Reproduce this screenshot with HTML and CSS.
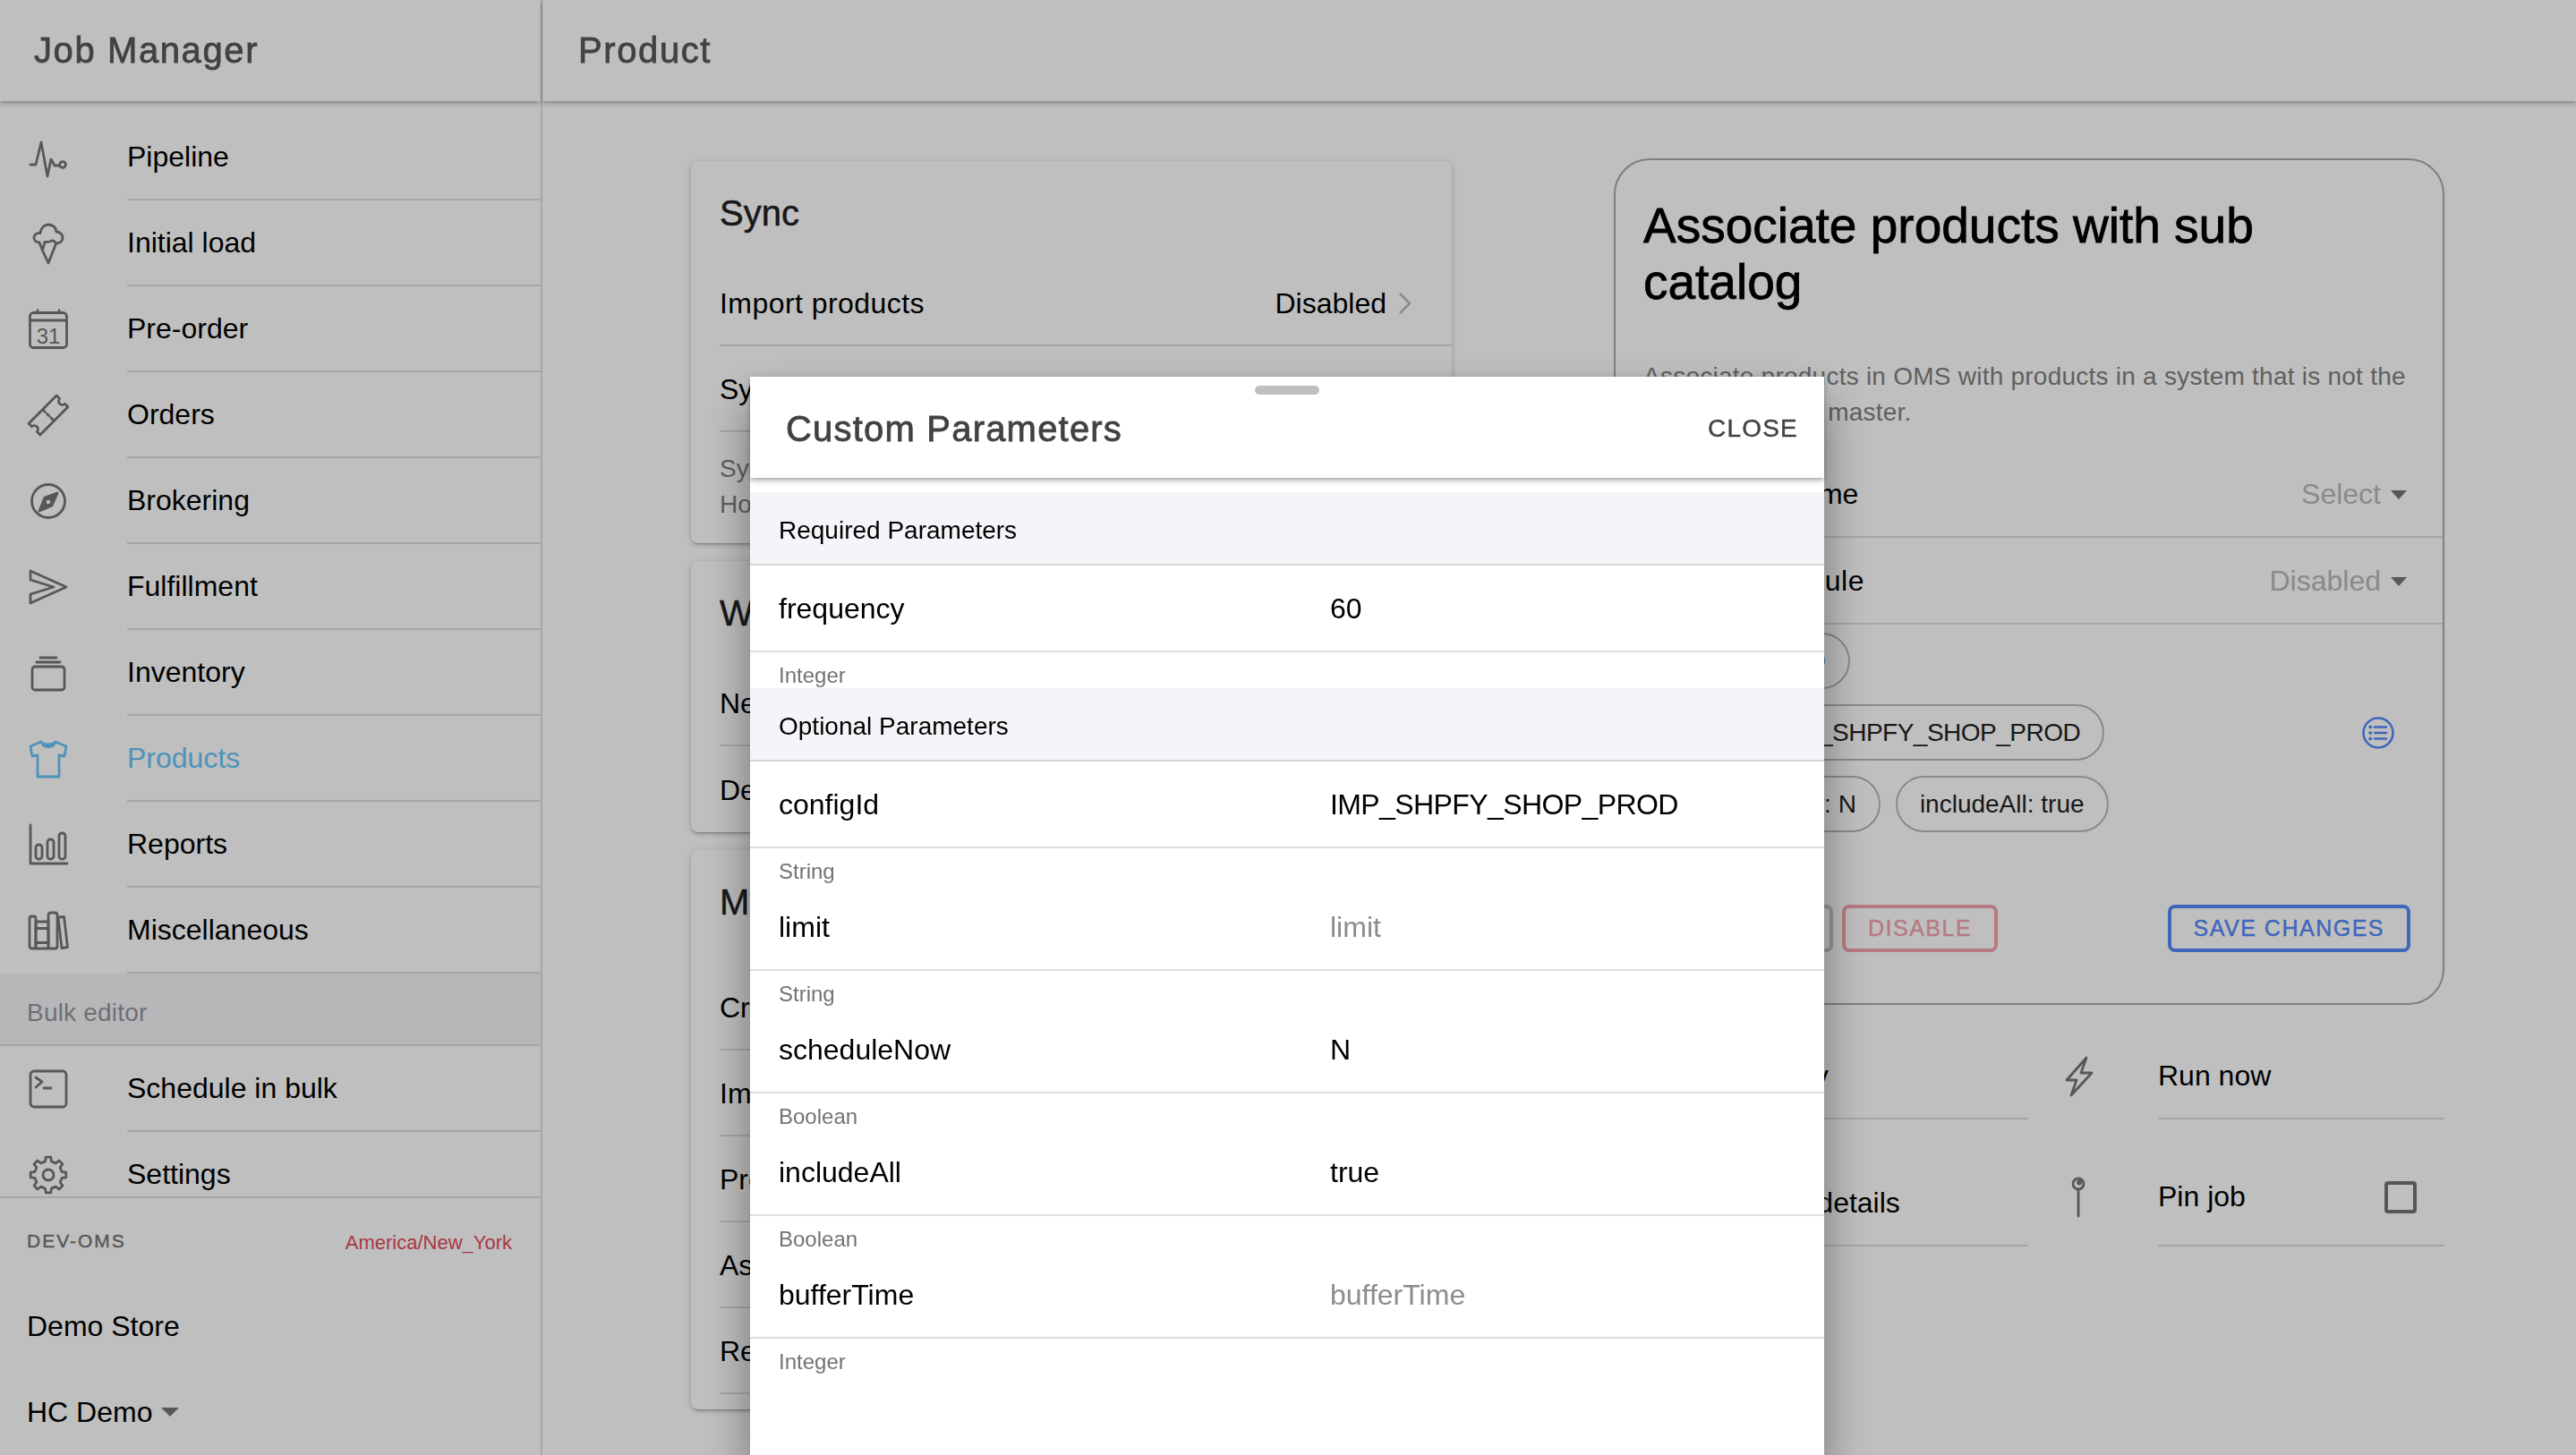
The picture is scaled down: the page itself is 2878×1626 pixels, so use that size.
FILE: index.html
```html
<!DOCTYPE html>
<html lang="en">
  <head>
    <meta charset="UTF-8" />
    <meta name="viewport" content="width=device-width, initial-scale=1.0" />
    <title>Job Manager</title>
    <link rel="stylesheet" href="styles.css">
  </head>
  <body>
    <div class="app">
      <aside class="sidebar">
        <header class="topbar"><h1 class="topbar-title">Job Manager</h1></header>
        <nav class="nav">
          <a class="nav-item">
            <svg class="icon" viewBox="0 0 44 44"><path d="M2 30h6l6-25 7 38 4-19 4 7h5"/><circle cx="38" cy="30" r="3.4"/></svg>
            <span class="nav-label">Pipeline</span>
          </a>
          <a class="nav-item">
            <svg class="icon" viewBox="0 0 44 44"><path d="M13 10.5C14 4 18 1 22 1s9 3 9 8c4 0 7 3 7 6.5 0 4-3 6.5-7.5 6.5-1-2-3-3.5-5.5-3-1 1.5-4 1.5-7 1.5l-2.5 9.5-3.5-9C8 21 6 18.5 6 15.5s3-5.500 7-5z"/><path d="M15.5 30L22 44l8.7-22"/></svg>
            <span class="nav-label">Initial load</span>
          </a>
          <a class="nav-item">
            <svg class="icon" viewBox="0 0 44 44"><rect x="1.5" y="3.5" width="41" height="39" rx="4"/><path d="M2 12h40M10 1v3M34 1v3"/><text class="icon-text" x="22" y="38" text-anchor="middle">31</text></svg>
            <span class="nav-label">Pre-order</span>
          </a>
          <a class="nav-item">
            <svg class="icon" viewBox="0 0 44 44"><g transform="rotate(-45 22 22)"><path d="M0 13h44v5a4 4 0 0 0 0 8v5H0v-5a4 4 0 0 0 0-8z"/><path d="M22 14v16" stroke-dasharray="3 3"/></g></svg>
            <span class="nav-label">Orders</span>
          </a>
          <a class="nav-item">
            <svg class="icon" viewBox="0 0 44 44"><circle cx="22" cy="22" r="18.5"/><path class="icon-fill" d="M32 13l-6 14-14 6 6-15z"/><circle class="icon-hole" cx="22" cy="23" r="2.2"/></svg>
            <span class="nav-label">Brokering</span>
          </a>
          <a class="nav-item">
            <svg class="icon" viewBox="0 0 44 44"><path d="M2 4l40 18L2 40V30l26-8L2 14z"/></svg>
            <span class="nav-label">Fulfillment</span>
          </a>
          <a class="nav-item">
            <svg class="icon" viewBox="0 0 44 44"><rect x="4" y="15" width="36" height="26" rx="3"/><path d="M9 10h26M13 5h18"/></svg>
            <span class="nav-label">Inventory</span>
          </a>
          <a class="nav-item nav-item-active">
            <svg class="icon" viewBox="0 0 44 44"><path d="M14 3L2 8l2 11 6-1v24h24V18l6 1 2-11-12-5c-2 4-14 4-16 0z"/><path d="M15 4c1 6 13 6 14 0"/></svg>
            <span class="nav-label">Products</span>
          </a>
          <a class="nav-item">
            <svg class="icon" viewBox="0 0 44 44"><path d="M2 0v43h41"/><rect x="8" y="22" width="7" height="16" rx="3"/><rect x="21" y="16" width="7" height="22" rx="3"/><rect x="34" y="9" width="7" height="29" rx="3"/></svg>
            <span class="nav-label">Reports</span>
          </a>
          <a class="nav-item">
            <svg class="icon" viewBox="0 0 44 44"><rect x="1" y="6" width="7" height="36" rx="2.5"/><rect x="8" y="12" width="14" height="30"/><path d="M8 19.5h14M8 35.5h14"/><rect x="22" y="2" width="10" height="40" rx="2.5"/><path d="M33 7l6.5-.5 4 34-6.5 1z"/></svg>
            <span class="nav-label">Miscellaneous</span>
          </a>
          <div class="nav-band">Bulk editor</div>
          <a class="nav-item">
            <svg class="icon" viewBox="0 0 44 44"><rect x="2" y="2" width="40" height="40" rx="4"/><path d="M8 9l7 5-7 6M17 21h8"/></svg>
            <span class="nav-label">Schedule in bulk</span>
          </a>
          <a class="nav-item">
            <svg class="icon" viewBox="0 0 44 44"><polygon points="18.510,6.900 19.220,2.190 24.780,2.190 25.490,6.900 30.210,8.860 34.040,6.030 37.970,9.960 35.140,13.790 37.100,18.510 41.810,19.220 41.810,24.780 37.100,25.490 35.140,30.210 37.970,34.040 34.040,37.970 30.210,35.140 25.490,37.100 24.780,41.810 19.220,41.810 18.510,37.100 13.790,35.140 9.960,37.970 6.030,34.040 8.860,30.210 6.900,25.490 2.190,24.780 2.190,19.220 6.900,18.510 8.860,13.790 6.030,9.960 9.960,6.030 13.790,8.860"/><circle cx="22" cy="22" r="6"/></svg>
            <span class="nav-label">Settings</span>
          </a>
        </nav>
        <footer class="sidebar-footer">
          <div class="instance-row">
            <span class="instance-name">DEV-OMS</span>
            <span class="instance-zone">America/New_York</span>
          </div>
          <div class="footer-row">Demo Store</div>
          <div class="footer-row">HC Demo<span class="caret caret-footer"></span></div>
        </footer>
      </aside>

      <main class="main">
        <header class="topbar topbar-main"><h2 class="topbar-title">Product</h2></header>
        <div class="content">
          <section class="left-col">
            <div class="card">
              <h3 class="card-title">Sync</h3>
              <div class="row">
                <span class="row-wide">Import products</span>
                <span class="row-end">Disabled
                  <svg class="chevron" viewBox="0 0 16 26"><path d="M2 2l11 11L2 24"/></svg>
                </span>
              </div>
              <div class="row"><span>Sync products</span></div>
              <p class="card-note">Sync products<br>How often to sync</p>
            </div>
            <div class="card">
              <h3 class="card-title">Webhooks</h3>
              <div class="row"><span>New products</span></div>
              <div class="row row-last"><span>Delete products</span></div>
            </div>
            <div class="card card-spaced">
              <h3 class="card-title">Miscellaneous</h3>
              <div class="row"><span>Create products</span></div>
              <div class="row"><span>Import logs</span></div>
              <div class="row"><span>Product tags</span></div>
              <div class="row"><span>Associate variants</span></div>
              <div class="row"><span>Reset</span></div>
            </div>
          </section>

          <section class="right-col">
            <div class="panel">
              <h3 class="panel-title">Associate products with sub catalog</h3>
              <p class="panel-desc">Associate products in OMS with products in a system that is not the<br>primary product master.</p>
              <div class="row panel-row">
                <span class="row-tight">Update job name</span>
                <span class="row-select">Select<span class="caret"></span></span>
              </div>
              <div class="row panel-row">
                <span class="row-wide">Update schedule</span>
                <span class="row-select">Disabled<span class="caret"></span></span>
              </div>
              <div class="chips-row">
                <div class="chips">
                  <span class="chip chip-first">frequency: 60</span>
                  <span class="chip">configId:&nbsp;<span class="code-text">IMP_SHPFY_SHOP_PROD</span></span>
                  <span class="chip">scheduleNow: N</span>
                  <span class="chip">includeAll: true</span>
                </div>
                <svg class="list-icon" viewBox="0 0 36 36">
                  <circle cx="18" cy="18" r="16.5"/>
                  <path d="M14 11.5h13M14 18h13M14 24.5h13"/>
                  <path class="list-dots" d="M9 11.5h.5M9 18h.5M9 24.5h.5"/>
                </svg>
              </div>
              <div class="panel-actions">
                <button class="btn btn-muted">SKIP ONCE</button>
                <button class="btn btn-danger">DISABLE</button>
                <button class="btn btn-primary">SAVE CHANGES</button>
              </div>
            </div>

            <div class="actions-grid">
              <div class="action action-left"><span class="action-label">Job history</span></div>
              <div class="action action-right">
                <svg class="icon" viewBox="0 0 44 44"><path d="M31 1L9 26h11l-6 17 23-25H25z"/></svg>
                <span class="action-label">Run now</span>
              </div>
              <div class="action action-left action-left-low"><span class="action-label">Schedule details</span></div>
              <div class="action action-right">
                <svg class="icon" viewBox="0 0 44 44"><circle cx="22" cy="7" r="6"/><path d="M22 13v30"/><circle class="icon-fill" cx="23" cy="5.5" r="1.5"/></svg>
                <span class="action-label">Pin job</span>
                <span class="checkbox"></span>
              </div>
            </div>
          </section>
        </div>
      </main>
    </div>

    <div class="backdrop"></div>

    <div class="modal">
      <span class="modal-handle"></span>
      <header class="modal-header">
        <h2 class="modal-title">Custom Parameters</h2>
        <span class="modal-close">CLOSE</span>
      </header>
      <div class="modal-body">
        <div class="param-band">Required Parameters</div>
        <div class="param-row"><span class="param-name">frequency</span><span>60</span></div>
        <div class="param-type">Integer</div>

        <div class="param-band">Optional Parameters</div>
        <div class="param-row"><span class="param-name">configId</span><span class="code-text">IMP_SHPFY_SHOP_PROD</span></div>
        <div class="param-type">String</div>
        <div class="param-row"><span class="param-name">limit</span><span class="param-empty">limit</span></div>
        <div class="param-type">String</div>
        <div class="param-row"><span class="param-name">scheduleNow</span><span>N</span></div>
        <div class="param-type">Boolean</div>
        <div class="param-row"><span class="param-name">includeAll</span><span>true</span></div>
        <div class="param-type">Boolean</div>
        <div class="param-row"><span class="param-name">bufferTime</span><span class="param-empty">bufferTime</span></div>
        <div class="param-type">Integer</div>
      </div>
    </div>
  </body>
</html>
```

FILE: styles.css
```css
* {
    box-sizing: border-box;
}
body {
    margin: 0;
    height: 100vh;
    overflow: hidden;
    font-family: "Liberation Sans", Arial, sans-serif;
    font-size: 32px;
    color: #000;
    background-color: #fff;
}
h1, h2, h3, p {
    margin: 0;
    font-weight: normal;
}
.app {
    display: flex;
    height: 100vh;
}
.code-text {
    letter-spacing: -0.6px;
}

/* sidebar */
.sidebar {
    display: flex;
    flex-direction: column;
    flex: 0 0 606px;
    border-right: 2px solid #dedede;
}
.topbar {
    position: relative;
    z-index: 1;
    flex: 0 0 113px;
    display: flex;
    align-items: center;
    padding-left: 38px;
    box-shadow: 0 2px 4px -1px rgba(0, 0, 0, 0.2), 0 4px 5px rgba(0, 0, 0, 0.14);
}
.topbar-main {
    padding-left: 40px;
}
.topbar-title {
    font-size: 40px;
    letter-spacing: 1.6px;
    color: #424242;
    -webkit-text-stroke: 0.8px #424242;
}
.nav {
    flex: 1;
    min-height: 0;
    overflow: hidden;
    padding-top: 15px;
}
.nav-item {
    display: flex;
    height: 96px;
    padding-left: 32px;
}
.nav-item-active {
    color: #68c4f8;
}
.nav-item-active .icon {
    stroke: #68c4f8;
}
.nav-label {
    flex: 1;
    display: flex;
    align-items: center;
    margin-left: 66px;
    border-bottom: 2px solid #dedede;
}
.nav-item .icon {
    align-self: center;
}
.icon {
    flex: 0 0 44px;
    width: 44px;
    height: 44px;
    overflow: visible;
    fill: none;
    stroke: #757575;
    stroke-width: 2.8;
    stroke-linecap: round;
    stroke-linejoin: round;
}
.icon-fill {
    fill: #757575;
}
.icon-hole {
    fill: #fff;
    stroke: none;
}
.icon-text {
    font-size: 24px;
    fill: #757575;
    stroke: none;
}
.nav-band {
    display: flex;
    align-items: center;
    height: 81px;
    padding: 8px 0 0 30px;
    font-size: 28px;
    letter-spacing: 0.2px;
    color: #94959a;
    background-color: #f4f5f8;
    border-bottom: 2px solid #dedede;
}
.sidebar-footer {
    flex: 0 0 289px;
    border-top: 2px solid #dedede;
}
.instance-row {
    display: flex;
    justify-content: space-between;
    align-items: center;
    height: 95px;
    padding: 0 32px 0 30px;
}
.instance-name {
    font-size: 21px;
    letter-spacing: 2px;
    color: #757575;
    -webkit-text-stroke: 0.4px #757575;
}
.instance-zone {
    margin-top: 4px;
    font-size: 22px;
    color: #e4485c;
}
.footer-row {
    display: flex;
    align-items: center;
    height: 96px;
    padding-left: 30px;
}
.caret {
    display: inline-block;
    margin-left: 11px;
    border-top: 10px solid #757575;
    border-left: 9px solid transparent;
    border-right: 9px solid transparent;
}
.caret-footer {
    margin-left: 10px;
    border-left-width: 10px;
    border-right-width: 10px;
}

/* main area */
.main {
    flex: 1;
    display: flex;
    flex-direction: column;
    min-width: 0;
}
.content {
    flex: 1;
    display: grid;
    grid-template-columns: 850px 928px;
    column-gap: 181px;
    padding: 64px 0 0 166px;
}
.left-col {
    display: flex;
    flex-direction: column;
    gap: 20px;
    padding-top: 3px;
}
.card {
    border-radius: 8px;
    background-color: #fff;
    box-shadow: 0 3px 2px -2px rgba(0, 0, 0, 0.2), 0 2px 4px rgba(0, 0, 0, 0.14), 0 1px 8px rgba(0, 0, 0, 0.12);
}
.card-spaced {
    padding-bottom: 17px;
}
.card-spaced .card-title {
    height: 128px;
}
.card-title {
    height: 111px;
    padding: 35px 0 0 32px;
    font-size: 40px;
    line-height: 46px;
    color: #222;
    -webkit-text-stroke: 0.5px #222;
}
.row {
    display: flex;
    justify-content: space-between;
    align-items: center;
    height: 96px;
    margin-left: 32px;
    padding-top: 2px;
    border-bottom: 2px solid #dedede;
}
.row-last {
    border-bottom: none;
}
.row-wide {
    letter-spacing: 0.45px;
}
.row-tight {
    letter-spacing: -0.25px;
}
.row-end {
    display: flex;
    align-items: center;
    margin-right: 44px;
}
.chevron {
    width: 16px;
    height: 26px;
    margin-left: 13px;
    fill: none;
    stroke: #b8b8b8;
    stroke-width: 2.5;
}
.card-note {
    padding: 21px 0 23px 32px;
    font-size: 28px;
    line-height: 40px;
    color: #808080;
}

/* right panel */
.panel {
    height: 946px;
    padding: 42px 0 0 31px;
    border: 2px solid #a9a9b0;
    border-radius: 40px;
}
.panel-title {
    width: 800px;
    font-size: 55px;
    line-height: 63px;
    -webkit-text-stroke: 0.8px #000;
}
.panel-desc {
    margin-top: 54px;
    font-size: 28px;
    line-height: 40px;
    letter-spacing: 0.24px;
    color: #808080;
}
.panel-row {
    height: 97px;
    margin-left: 0;
}
.panel-row:first-of-type {
    margin-top: 23px;
}
.row-select {
    display: flex;
    align-items: center;
    margin-right: 40px;
    color: #b8b8b8;
}
.chips-row {
    display: flex;
    justify-content: space-between;
    align-items: center;
    padding: 9px 54px 0 7px;
}
.chips {
    display: flex;
    flex-wrap: wrap;
    gap: 17px;
    width: 560px;
}
.chip {
    display: flex;
    align-items: center;
    height: 63px;
    padding: 0 25px;
    font-size: 28px;
    color: #222;
    border: 2px solid #b9b9b9;
    border-radius: 32px;
}
.chip .code-text {
    letter-spacing: -0.5px;
}
.chip-first {
    min-width: 223px;
}
.list-icon {
    width: 36px;
    height: 36px;
    fill: none;
    stroke: #5488fa;
    stroke-width: 2.5;
    stroke-linecap: round;
}
.list-dots {
    stroke-width: 3.5;
}
.panel-actions {
    display: flex;
    align-items: center;
    margin-top: 81px;
    padding-right: 36px;
}
.btn {
    height: 53px;
    padding: 0 25px;
    font-family: inherit;
    font-size: 25px;
    letter-spacing: 1.5px;
    background: transparent;
    border: 4px solid;
    border-radius: 8px;
    -webkit-text-stroke: 0.4px currentColor;
}
.btn-muted {
    width: 212px;
    padding: 0;
    color: #c7c7c7;
    border-color: #c7c7c7;
}
.btn-danger {
    margin-left: 10px;
    color: #f4a3ae;
    border-color: #f4a3ae;
}
.btn-primary {
    margin-left: auto;
    color: #5488fa;
    border-color: #5488fa;
}
.actions-grid {
    display: grid;
    grid-template-columns: 463px 465px;
    grid-template-rows: 128px 142px;
}
.action {
    display: flex;
    align-items: center;
}
.action-label {
    flex: 1;
}
.action-left {
    padding-top: 32px;
    padding-left: 85px;
    border-bottom: 2px solid #dedede;
}
.action-left-low {
    padding-top: 46px;
}
.action-right {
    padding-top: 32px;
    padding-left: 34px;
}
.action-right .icon {
    align-self: center;
    margin-right: 67px;
}
.action-right .action-label {
    display: flex;
    align-items: center;
    align-self: stretch;
    margin-top: -32px;
    padding-top: 32px;
    border-bottom: 2px solid #dedede;
}
.checkbox {
    width: 36px;
    height: 36px;
    margin: 0 31px 0 -67px;
    border: 4px solid #757575;
    border-radius: 4px;
}

/* modal */
.backdrop {
    position: fixed;
    inset: 0;
    background-color: rgba(0, 0, 0, 0.25);
}
.modal {
    position: fixed;
    top: 421px;
    bottom: 0;
    left: 838px;
    width: 1200px;
    background-color: #fff;
    box-shadow: 0 28px 48px rgba(0, 0, 0, 0.4);
}
.modal-handle {
    position: absolute;
    top: 10px;
    left: 564px;
    width: 72px;
    height: 10px;
    border-radius: 5px;
    background-color: #c0c0c0;
}
.modal-header {
    position: relative;
    display: flex;
    justify-content: space-between;
    align-items: center;
    height: 113px;
    padding: 3px 29px 0 40px;
    box-shadow: 0 2px 4px -1px rgba(0, 0, 0, 0.2), 0 4px 5px rgba(0, 0, 0, 0.14), 0 1px 10px rgba(0, 0, 0, 0.12);
}
.modal-title {
    font-size: 40px;
    letter-spacing: 1.2px;
    color: #424242;
    -webkit-text-stroke: 0.8px #424242;
}
.modal-close {
    font-size: 28px;
    letter-spacing: 1.2px;
    color: #424242;
    -webkit-text-stroke: 0.4px #424242;
}
.modal-body {
    margin-top: 16px;
}
.param-band {
    display: flex;
    align-items: center;
    height: 82px;
    padding: 6px 0 0 32px;
    font-size: 28px;
    background-color: #f4f5f8;
    border-bottom: 2px solid #d7d8da;
}
.param-row {
    display: flex;
    align-items: center;
    height: 97px;
    padding: 2px 0 0 32px;
    border-bottom: 2px solid #dedede;
}
.param-name {
    flex: 0 0 616px;
}
.param-empty {
    color: #8c8c8c;
}
.param-type {
    height: 40px;
    padding: 12px 0 0 32px;
    font-size: 24px;
    line-height: 28px;
    color: #737373;
}
```
